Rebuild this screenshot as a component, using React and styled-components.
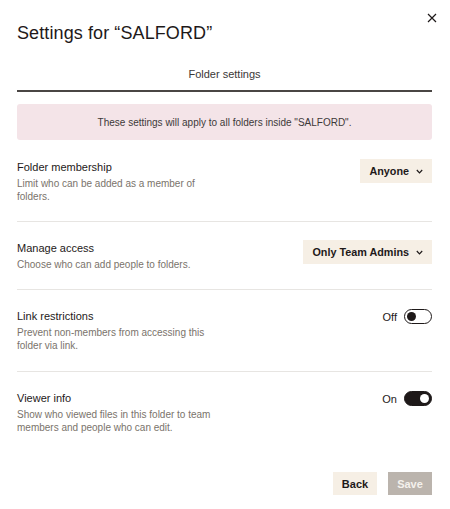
import React from "react";
import styled, { createGlobalStyle } from "styled-components";

const GlobalStyle = createGlobalStyle`
  html, body { margin: 0; padding: 0; background: #ffffff; }
  body { font-family: "Liberation Sans", Arial, sans-serif; color: #1e1919; }
  * { box-sizing: border-box; }
`;

const Dialog = styled.div`
  width: 450px;
  padding: 0 18px 0 17px;
  background: #ffffff;
`;

const Header = styled.div`
  display: flex;
  justify-content: space-between;
  align-items: flex-start;
`;

const Title = styled.h1`
  margin: 0;
  padding-top: 21px;
  font-size: 18px;
  line-height: 24px;
  font-weight: 400;
  letter-spacing: 0.1px;
  color: #1e1919;
`;

const CloseButton = styled.button`
  margin: 12px -5px 0 0;
  padding: 0;
  width: 11px;
  height: 11px;
  border: none;
  background: transparent;
  display: flex;
  align-items: center;
  justify-content: center;
  color: #1e1919;
  cursor: pointer;
`;

const TabBar = styled.div`
  margin-top: 21px;
  display: flex;
  border-bottom: 2px solid #4a4644;
`;

const Tab = styled.div`
  flex: 1;
  text-align: center;
  font-size: 11px;
  line-height: 16px;
  color: #3b3737;
  padding-bottom: 8px;
`;

const Banner = styled.div`
  margin-top: 12px;
  height: 36px;
  border-radius: 3px;
  background: #f4e4e8;
  display: flex;
  align-items: center;
  justify-content: center;
  font-size: 10px;
  color: #3d3938;
`;

const Row = styled.div`
  display: flex;
  justify-content: space-between;
  align-items: flex-start;
  padding: ${(p) => (p.$first ? "19px" : "18px")} 0 ${(p) => p.$pb || "18px"};
  border-bottom: ${(p) => (p.$last ? "none" : "1px solid #e7e5e2")};
`;

const Info = styled.div`
  display: flex;
  flex-direction: column;
  gap: 2px;
`;

const RowTitle = styled.div`
  font-size: 11px;
  line-height: 16px;
  color: #1e1919;
`;

const RowDesc = styled.div`
  font-size: 10px;
  line-height: 13px;
  color: #7a736b;
  max-width: ${(p) => p.$width || "200px"};
`;

const Select = styled.button`
  display: flex;
  align-items: center;
  gap: 7px;
  height: 24px;
  padding: 0 9px;
  border: none;
  border-radius: 0;
  background: #f6efe5;
  font-family: inherit;
  font-size: 10.8px;
  font-weight: 700;
  color: #1e1919;
  cursor: pointer;
`;

const ToggleWrap = styled.label`
  display: flex;
  align-items: center;
  gap: 7px;
  height: 17px;
  font-size: 11px;
  color: #1e1919;
`;

const Track = styled.span`
  position: relative;
  width: 28px;
  height: 15px;
  border-radius: 8px;
  border: 1.3px solid #1e1919;
  background: ${(p) => (p.$on ? "#1e1919" : "#ffffff")};
`;

const Knob = styled.span`
  position: absolute;
  top: 50%;
  ${(p) => (p.$on ? "right: 2px;" : "left: 2px;")}
  width: 9px;
  height: 9px;
  margin-top: -4.5px;
  border-radius: 50%;
  background: ${(p) => (p.$on ? "#ffffff" : "#1e1919")};
`;

const Footer = styled.div`
  display: flex;
  justify-content: flex-end;
  gap: 11px;
  margin-top: 20px;
`;

const Button = styled.button`
  width: 44px;
  height: 23px;
  border: none;
  border-radius: 0;
  padding: 0;
  font-family: inherit;
  font-size: 11px;
  font-weight: 700;
  background: ${(p) => (p.$primary ? "#bbb4ad" : "#f6efe5")};
  color: ${(p) => (p.$primary ? "#f4f1ec" : "#1e1919")};
  cursor: pointer;
`;

const Chevron = () => (
  <svg width="7" height="5" viewBox="0 0 7 5" fill="none">
    <path d="M0.8 1 L3.5 3.8 L6.2 1" stroke="#1e1919" strokeWidth="1.2" />
  </svg>
);

const CloseIcon = () => (
  <svg width="10" height="10" viewBox="0 0 10 10" fill="none">
    <path d="M1 1 L9 9 M9 1 L1 9" stroke="#1e1919" strokeWidth="1.2" />
  </svg>
);

const Toggle = ({ on, label }) => (
  <ToggleWrap>
    {label}
    <Track $on={on}>
      <Knob $on={on} />
    </Track>
  </ToggleWrap>
);

export default function App() {
  return (
    <>
      <GlobalStyle />
      <Dialog>
        <Header>
          <Title>Settings for “SALFORD”</Title>
          <CloseButton aria-label="Close">
            <CloseIcon />
          </CloseButton>
        </Header>
        <TabBar>
          <Tab>Folder settings</Tab>
        </TabBar>
        <Banner>These settings will apply to all folders inside "SALFORD".</Banner>

        <Row $first>
          <Info>
            <RowTitle>Folder membership</RowTitle>
            <RowDesc $width="185px">Limit who can be added as a member of folders.</RowDesc>
          </Info>
          <Select>
            Anyone <Chevron />
          </Select>
        </Row>

        <Row>
          <Info>
            <RowTitle>Manage access</RowTitle>
            <RowDesc>Choose who can add people to folders.</RowDesc>
          </Info>
          <Select>
            Only Team Admins <Chevron />
          </Select>
        </Row>

        <Row $pb="19px">
          <Info>
            <RowTitle>Link restrictions</RowTitle>
            <RowDesc $width="200px">Prevent non-members from accessing this folder via link.</RowDesc>
          </Info>
          <Toggle on={false} label="Off" />
        </Row>

        <Row $last>
          <Info>
            <RowTitle>Viewer info</RowTitle>
            <RowDesc $width="200px">Show who viewed files in this folder to team members and people who can edit.</RowDesc>
          </Info>
          <Toggle on label="On" />
        </Row>

        <Footer>
          <Button>Back</Button>
          <Button $primary>Save</Button>
        </Footer>
      </Dialog>
    </>
  );
}
